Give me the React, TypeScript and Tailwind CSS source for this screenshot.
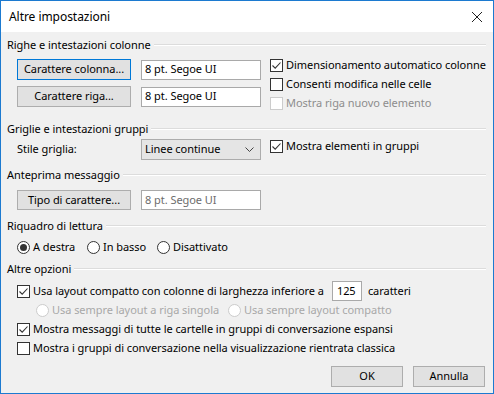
import React from "react";

const Check = ({ checked, disabled }: { checked?: boolean; disabled?: boolean }) => (
  <span
    className={`flex h-[13px] w-[13px] shrink-0 items-center justify-center border bg-white ${
      disabled ? "border-[#cccccc]" : "border-[#333333]"
    }`}
  >
    {checked && (
      <svg width="11" height="11" viewBox="0 0 11 11">
        <path d="M1.5 5.5 L4.2 8.2 L9.5 2.5" fill="none" stroke="#333" strokeWidth="1.1" />
      </svg>
    )}
  </span>
);

const Radio = ({ checked, disabled }: { checked?: boolean; disabled?: boolean }) => (
  <span
    className={`flex h-[13px] w-[13px] shrink-0 items-center justify-center rounded-full border bg-white ${
      disabled ? "border-[#cccccc]" : "border-[#333333]"
    }`}
  >
    {checked && <span className="h-[7px] w-[7px] rounded-full bg-[#333333]" />}
  </span>
);

const Header = ({ title }: { title: string }) => (
  <div className="flex h-[14px] items-center">
    <span className="pr-[3px]">{title}</span>
    <div className="flex-1 border-t border-b border-t-[#dcdcdc] border-b-white" />
  </div>
);

const Btn = ({ label, focused, className = "" }: { label: string; focused?: boolean; className?: string }) => (
  <div
    className={`flex items-center justify-center border bg-[#e1e1e1] ${
      focused ? "border-[#0078d7]" : "border-[#adadad]"
    } ${className}`}
  >
    {label}
  </div>
);

const TextBox = ({ value, dim }: { value: string; dim?: boolean }) => (
  <div
    className={`flex h-[20px] w-[120px] items-center border border-[#a9a9a9] bg-white pl-[3px] ${
      dim ? "text-[#6d6d6d]" : ""
    }`}
  >
    {value}
  </div>
);

const CheckRow = ({ label, checked, disabled }: { label: string; checked?: boolean; disabled?: boolean }) => (
  <div className={`flex h-[13px] items-center gap-[3px] ${disabled ? "text-[#8d8d8d]" : ""}`}>
    <Check checked={checked} disabled={disabled} />
    <span>{label}</span>
  </div>
);

export default function App() {
  return (
    <div
      className="flex h-[394px] w-[494px] flex-col whitespace-nowrap border border-[#1c7ad0] bg-[#f0f0f0] text-[11px] tracking-[-0.05px] text-black"
      style={{ fontFamily: '"Noto Sans", "Open Sans", sans-serif' }}
    >
      {/* title bar */}
      <div className="flex h-[31px] items-center justify-between bg-white pl-[8px] pr-[10px] text-[12px]">
        <span>Altre impostazioni</span>
        <svg width="12" height="12" viewBox="0 0 12 12">
          <path d="M1 1 L11 11 M11 1 L1 11" stroke="#222" strokeWidth="1" />
        </svg>
      </div>

      <div className="flex flex-1 flex-col pl-[6px] pr-[7px] pt-[6px]">
        <Header title="Righe e intestazioni colonne" />
        <div className="mt-[7px] flex pl-[10px]">
          <div className="flex flex-col gap-[6px]">
            <div className="flex items-center gap-[10px]">
              <Btn label="Carattere colonna..." focused className="h-[21px] w-[114px]" />
              <TextBox value="8 pt. Segoe UI" />
            </div>
            <div className="flex items-center gap-[10px]">
              <Btn label="Carattere riga..." className="h-[21px] w-[114px]" />
              <TextBox value="8 pt. Segoe UI" />
            </div>
          </div>
          <div className="ml-[9px] flex flex-col gap-[6px]">
            <CheckRow label="Dimensionamento automatico colonne" checked />
            <CheckRow label="Consenti modifica nelle celle" />
            <CheckRow label="Mostra riga nuovo elemento" disabled />
          </div>
        </div>

        <div className="mt-[12px]">
          <Header title="Griglie e intestazioni gruppi" />
        </div>
        <div className="mt-[3px] flex items-center pl-[10px]">
          <span className="w-[124px]">Stile griglia:</span>
          <div className="flex h-[21px] w-[120px] items-center justify-between border border-[#acacac] bg-[#e5e5e5] pl-[3px] pr-[6px]">
            <span>Linee continue</span>
            <svg width="9" height="6" viewBox="0 0 9 6">
              <path d="M0.5 0.5 L4.5 4.5 L8.5 0.5" fill="none" stroke="#444" strokeWidth="1" />
            </svg>
          </div>
          <div className="ml-[9px] -mt-[7px]">
            <CheckRow label="Mostra elementi in gruppi" checked />
          </div>
        </div>

        <div className="mt-[8px]">
          <Header title="Anteprima messaggio" />
        </div>
        <div className="mt-[8px] flex items-center gap-[10px] pl-[10px]">
          <Btn label="Tipo di carattere..." className="h-[20px] w-[114px]" />
          <TextBox value="8 pt. Segoe UI" dim />
        </div>

        <div className="mt-[9px]">
          <Header title="Riquadro di lettura" />
        </div>
        <div className="mt-[8px] flex h-[13px] items-center pl-[10px]">
          <div className="flex w-[70px] items-center gap-[3px]">
            <Radio checked />
            <span>A destra</span>
          </div>
          <div className="flex w-[70px] items-center gap-[3px]">
            <Radio />
            <span>In basso</span>
          </div>
          <div className="flex items-center gap-[3px]">
            <Radio />
            <span>Disattivato</span>
          </div>
        </div>

        <div className="mt-[8px]">
          <Header title="Altre opzioni" />
        </div>
        <div className="mt-[5px] flex h-[20px] items-center pl-[10px]">
          <CheckRow label="Usa layout compatto con colonne di larghezza inferiore a" checked />
          <div className="ml-[8px] flex h-[20px] w-[30px] items-center border border-[#a9a9a9] bg-white pl-[4px]">
            125
          </div>
          <span className="ml-[6px]">caratteri</span>
        </div>
        <div className="mt-[3px] flex h-[13px] items-center pl-[29px] text-[#a8a8a8]">
          <div className="flex w-[192px] items-center gap-[3px]">
            <Radio disabled />
            <span>Usa sempre layout a riga singola</span>
          </div>
          <div className="flex items-center gap-[3px]">
            <Radio disabled />
            <span>Usa sempre layout compatto</span>
          </div>
        </div>
        <div className="mt-[6px] pl-[10px]">
          <CheckRow label="Mostra messaggi di tutte le cartelle in gruppi di conversazione espansi" checked />
        </div>
        <div className="mt-[6px] pl-[10px]">
          <CheckRow label="Mostra i gruppi di conversazione nella visualizzazione rientrata classica" />
        </div>

        <div className="mt-[11px] flex justify-end gap-[10px] pr-[1px]">
          <Btn label="OK" className="h-[21px] w-[72px]" />
          <Btn label="Annulla" className="h-[21px] w-[72px]" />
        </div>
      </div>
    </div>
  );
}
